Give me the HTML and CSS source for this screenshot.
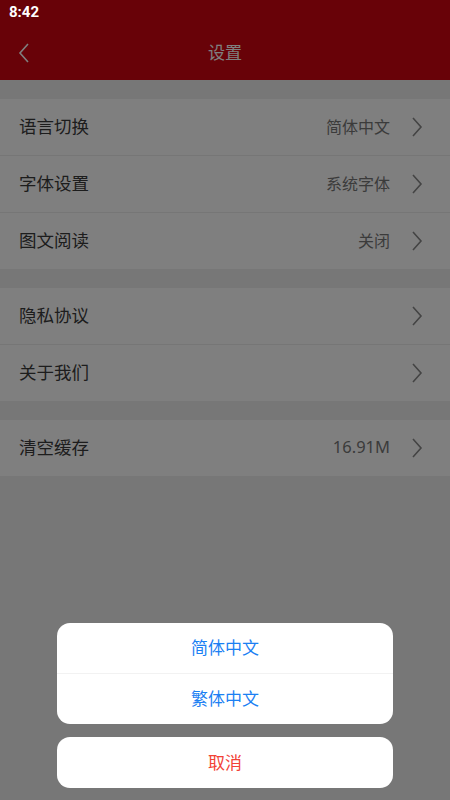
FILE: index.html
```html
<!DOCTYPE html>
<html lang="zh-CN">
<head>
<meta charset="utf-8">
<title>设置</title>
<link rel="stylesheet" href="styles.css">
</head>
<body>
<div class="page">
  <header class="appbar">
    <div class="statusbar"></div>
    <div class="toolbar">
      <svg class="back" width="12" height="20" viewBox="0 0 12 20"><path d="M10 1 L2 10 L10 19" fill="none" stroke="#fff" stroke-width="1.6"/></svg>
      <div class="title">设置</div>
    </div>
  </header>

  <section class="group">
    <div class="row"><span class="label">语言切换</span><span class="value">简体中文</span><svg class="chev" width="12" height="20" viewBox="0 0 12 20"><path d="M2 1 L10 10 L2 19" fill="none" stroke="#888" stroke-width="1.6"/></svg></div>
    <div class="row"><span class="label">字体设置</span><span class="value">系统字体</span><svg class="chev" width="12" height="20" viewBox="0 0 12 20"><path d="M2 1 L10 10 L2 19" fill="none" stroke="#888" stroke-width="1.6"/></svg></div>
    <div class="row"><span class="label">图文阅读</span><span class="value">关闭</span><svg class="chev" width="12" height="20" viewBox="0 0 12 20"><path d="M2 1 L10 10 L2 19" fill="none" stroke="#888" stroke-width="1.6"/></svg></div>
  </section>

  <section class="group">
    <div class="row"><span class="label">隐私协议</span><span class="value"></span><svg class="chev" width="12" height="20" viewBox="0 0 12 20"><path d="M2 1 L10 10 L2 19" fill="none" stroke="#888" stroke-width="1.6"/></svg></div>
    <div class="row"><span class="label">关于我们</span><span class="value"></span><svg class="chev" width="12" height="20" viewBox="0 0 12 20"><path d="M2 1 L10 10 L2 19" fill="none" stroke="#888" stroke-width="1.6"/></svg></div>
  </section>

  <section class="group">
    <div class="row"><span class="label">清空缓存</span><span class="value num">16.91M</span><svg class="chev" width="12" height="20" viewBox="0 0 12 20"><path d="M2 1 L10 10 L2 19" fill="none" stroke="#888" stroke-width="1.6"/></svg></div>
  </section>
</div>

<div class="overlay"></div>
<div class="time">8:42</div>

<div class="sheet">
  <div class="card">
    <div class="option">简体中文</div>
    <div class="option">繁体中文</div>
  </div>
  <div class="card">
    <div class="option cancel">取消</div>
  </div>
</div>
</body>
</html>
```

FILE: styles.css
```css
html, body {
  margin: 0;
  padding: 0;
}
body {
  width: 450px;
  height: 800px;
  overflow: hidden;
  background: #eeeeee;
  font-family: "Noto Sans CJK SC", "Noto Sans", sans-serif;
  position: relative;
}
.appbar {
  background: #d00410;
}
.statusbar {
  height: 27px;
}
.toolbar {
  height: 53px;
  display: flex;
  align-items: center;
  justify-content: center;
  position: relative;
}
.back {
  position: absolute;
  left: 18px;
  top: 16px;
}
.title {
  color: #ffffff;
  font-size: 17px;
  margin-top: -4px;
}
.group {
  margin-top: 19px;
  background: #fff;
}
.row {
  height: 56px;
  display: flex;
  align-items: center;
  padding: 0 27px 0 19px;
  border-top: 1px solid #ececec;
}
.row:first-child {
  border-top: none;
}
.label {
  flex: 1;
  font-size: 17.5px;
  color: #3a3a3a;
  margin-top: -3px;
}
.value {
  font-size: 16px;
  color: #777;
  margin-right: 21px;
  margin-top: -3px;
}
.value.num {
  font-family: "Noto Sans", sans-serif;
  font-size: 16.5px;
}
.chev {
  display: block;
}
.overlay {
  position: absolute;
  inset: 0;
  background: rgba(0, 0, 0, 0.5);
}
.time {
  position: absolute;
  left: 9px;
  top: 3px;
  color: #fff;
  font-family: "Roboto", sans-serif;
  font-weight: bold;
  font-size: 15px;
}
.sheet {
  position: absolute;
  left: 57px;
  right: 57px;
  bottom: 12px;
  display: flex;
  flex-direction: column;
  gap: 13px;
}
.card {
  background: #fff;
  border-radius: 13px;
  overflow: hidden;
}
.option {
  height: 47px;
  padding-bottom: 3px;
  display: flex;
  align-items: center;
  justify-content: center;
  font-size: 17px;
  color: #1b80f3;
  border-top: 1px solid #f2f2f2;
}
.option:first-child {
  border-top: none;
}
.option.cancel {
  height: 48px;
  color: #f24236;
}
```
